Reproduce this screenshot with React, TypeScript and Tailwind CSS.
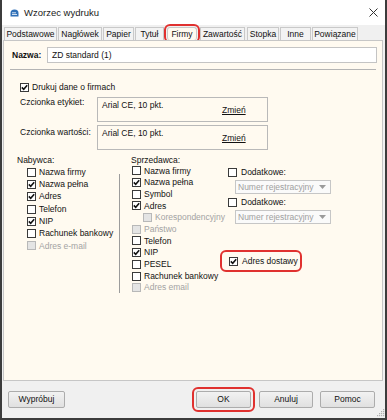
import clsx from "clsx";

const font = "font-['Liberation_Sans',Arial,sans-serif]";

function Check({ checked, disabled }: { checked?: boolean; disabled?: boolean }) {
  return (
    <span
      className={clsx(
        "flex h-[9px] w-[9px] shrink-0 items-center justify-center border",
        disabled ? "border-[#b8b8b8] bg-[#e4e4e4]" : "border-[#3a3a3a] bg-white"
      )}
    >
      {checked && (
        <svg width="7" height="7" viewBox="0 0 7 7">
          <path d="M0.8 3.4 L2.7 5.3 L6.2 1.3" stroke="#111" strokeWidth="1.6" fill="none" />
        </svg>
      )}
    </span>
  );
}

function Row({
  label,
  checked,
  disabled,
  className,
}: {
  label: string;
  checked?: boolean;
  disabled?: boolean;
  className?: string;
}) {
  return (
    <div className={clsx("flex items-center gap-[3px]", className)}>
      <Check checked={checked} disabled={disabled} />
      <span className={clsx("whitespace-nowrap leading-none", disabled ? "text-[#a3a3a3]" : "text-[#111]")}>
        {label}
      </span>
    </div>
  );
}

function FontBox({ labelClass, label }: { labelClass: string; label: string }) {
  return (
    <div className="flex h-[25px] pl-[16px]">
      <span className={clsx("w-[77px] leading-[10px]", labelClass)}>{label}</span>
      <div className="flex h-full w-[171px] border border-[#b9b9b9] bg-[#fffaf0] pl-[4px]">
        <span className="mt-[2px] w-[120px] self-start leading-[10px]">Arial CE, 10 pkt.</span>
        <span className="self-center leading-[10px] underline">Zmień</span>
      </div>
    </div>
  );
}

function Select() {
  return (
    <div className="ml-[7px] flex h-[14px] w-[96px] items-center justify-between border border-[#c6c6c6] bg-[#fafafa] pl-[2px] pr-[4px] text-[#a0a0a0]">
      <span className="leading-none whitespace-nowrap">Numer rejestracyjny</span>
      <svg width="7" height="4" viewBox="0 0 7 4">
        <path d="M0 0 H7 L3.5 4 Z" fill="#9a9a9a" />
      </svg>
    </div>
  );
}

function Btn({ children, className }: { children: React.ReactNode; className?: string }) {
  return (
    <div
      className={clsx(
        "flex h-[17px] items-center justify-center rounded-[2px] border border-[#acacac] bg-gradient-to-b from-[#f2f2f2] to-[#e0e0e0] text-[#111]",
        className
      )}
    >
      {children}
    </div>
  );
}

const tabs: { label: string; cls: string }[] = [
  { label: "Podstawowe", cls: "w-[53px]" },
  { label: "Nagłówek", cls: "ml-[1px] w-[44px]" },
  { label: "Papier", cls: "ml-[1px] w-[31px]" },
  { label: "Tytuł", cls: "ml-[1px] w-[29px]" },
  { label: "Firmy", cls: "ml-[3px] w-[30px]" },
  { label: "Zawartość", cls: "ml-[3px] w-[45px]" },
  { label: "Stopka", cls: "ml-[2px] w-[32px]" },
  { label: "Inne", cls: "ml-[1px] w-[31px]" },
  { label: "Powiązane", cls: "ml-[1px] w-[46px]" },
];

export default function App() {
  return (
    <div
      className={clsx(
        "flex h-[420px] w-[387px] flex-col overflow-hidden border-x-2 border-b-2 border-[#3c3c3c] bg-[#f0f0f0] text-[8.5px] text-[#111]",
        font
      )}
    >
      {/* title bar */}
      <div className="flex h-[25px] shrink-0 items-center bg-white pl-[8px] pr-[7px]">
        <svg width="9" height="8" viewBox="0 0 9 8" className="mr-[5px]">
          <path d="M0.5 4 A4 3.6 0 0 1 8.5 4 L8.5 7.5 L0.5 7.5 Z" fill="#2f6fb6" />
          <path d="M2 5.5 H7 M2 3.8 H6" stroke="#fff" strokeWidth="0.8" />
        </svg>
        <span className="text-[9.5px] leading-none text-[#1a1a1a]">Wzorzec wydruku</span>
        <svg width="9" height="9" viewBox="0 0 9 9" className="ml-auto">
          <path d="M0.5 0.5 L8.5 8.5 M8.5 0.5 L0.5 8.5" stroke="#333" strokeWidth="1" />
        </svg>
      </div>

      {/* tabs */}
      <div className="mt-[2px] flex h-[13px] shrink-0 pl-[2px]">
        {tabs.map((t) => (
          <div
            key={t.label}
            className={clsx(
              "flex h-full items-center justify-center border border-b-0 border-[#c9c9c9] leading-none",
              t.label === "Firmy"
                ? "rounded-[3px] bg-[#fffaf0] outline-2 outline-offset-1 outline-[#e0312f]"
                : "bg-[#f3f3f3]",
              t.cls
            )}
          >
            {t.label}
          </div>
        ))}
      </div>

      {/* panel */}
      <div className="ml-[1px] mr-[2px] flex flex-1 flex-col border border-[#c6c6c6] bg-[#fffaf0]">
        <div className="mt-[6px] flex h-[16px] items-center pl-[8px] pr-[5px]">
          <span className="w-[35px] font-bold">Nazwa:</span>
          <div className="flex h-full flex-1 items-center border border-[#c4c4c4] bg-white pl-[4px]">
            ZD standard (1)
          </div>
        </div>
        <div className="mx-[6px] mt-[6px] h-px bg-[#b4b4b4]" />

        <div className="mt-[11px] flex h-[12px] items-center pl-[16px]">
          <Row label="Drukuj dane o firmach" checked />
        </div>

        <div className="mt-[4px]">
          <FontBox label="Czcionka etykiet:" labelClass="mt-0" />
        </div>
        <div className="mt-[3px]">
          <FontBox label="Czcionka wartości:" labelClass="mt-[2px]" />
        </div>

        <div className="mt-[5px] flex pl-[13px]">
          {/* Nabywca */}
          <div className="flex w-[102px] flex-col">
            <span className="h-[11px] leading-[11px]">Nabywca:</span>
            <div className="flex flex-col pl-[10px]">
              <Row className="h-[12.3px]" label="Nazwa firmy" />
              <Row className="h-[12.3px]" label="Nazwa pełna" checked />
              <Row className="h-[12.3px]" label="Adres" checked />
              <Row className="h-[12.3px]" label="Telefon" />
              <Row className="h-[12.3px]" label="NIP" checked />
              <Row className="h-[12.3px]" label="Rachunek bankowy" />
              <Row className="h-[12.3px]" label="Adres e-mail" disabled />
            </div>
          </div>
          <div className="mt-[19px] h-[119px] w-px bg-[#9c9c9c]" />

          {/* Sprzedawca */}
          <div className="ml-[11px] flex w-[97px] flex-col">
            <span className="h-[10px] leading-[10px]">Sprzedawca:</span>
            <div className="flex flex-col pl-[1px]">
              <Row className="h-[11.7px]" label="Nazwa firmy" />
              <Row className="h-[11.7px]" label="Nazwa pełna" checked />
              <Row className="h-[11.7px]" label="Symbol" />
              <Row className="h-[11.7px]" label="Adres" checked />
              <Row className="h-[11.7px] pl-[11px]" label="Korespondencyjny" disabled />
              <Row className="h-[11.7px]" label="Państwo" disabled />
              <Row className="h-[11.7px]" label="Telefon" />
              <Row className="h-[11.7px]" label="NIP" checked />
              <Row className="h-[11.7px]" label="PESEL" />
              <Row className="h-[11.7px]" label="Rachunek bankowy" />
              <Row className="h-[11.7px]" label="Adres email" disabled />
            </div>
          </div>

          {/* right column */}
          <div className="flex flex-col pt-[11px]">
            <Row className="h-[12px] gap-[4px]" label="Dodatkowe:" />
            <div className="mt-[2px]">
              <Select />
            </div>
            <Row className="mt-[2px] h-[12px] gap-[4px]" label="Dodatkowe:" />
            <div className="mt-[2px]">
              <Select />
            </div>
            <div className="-ml-[6px] mt-[28px] flex h-[18px] w-[78px] items-center rounded-[4px] pl-[7px] outline-2 outline-[#e0312f]">
              <Row className="gap-[4px]" label="Adres dostawy" checked />
            </div>
          </div>
        </div>
      </div>

      {/* bottom bar */}
      <div className="flex h-[37px] shrink-0 items-center pl-[6px]">
        <Btn className="w-[57px]">Wypróbuj</Btn>
        <Btn className="ml-auto w-[55px] outline-2 outline-offset-[2px] outline-[#e0312f]">OK</Btn>
        <Btn className="ml-[8px] w-[54px]">Anuluj</Btn>
        <Btn className="ml-[7px] w-[55px]">Pomoc</Btn>
        <svg width="8" height="8" viewBox="0 0 8 8" className="ml-[2px] self-end mb-[1px]">
          <g fill="#b0b0b0">
            <rect x="6" y="0" width="1.2" height="1.2" />
            <rect x="4" y="2" width="1.2" height="1.2" />
            <rect x="6" y="2" width="1.2" height="1.2" />
            <rect x="2" y="4" width="1.2" height="1.2" />
            <rect x="4" y="4" width="1.2" height="1.2" />
            <rect x="6" y="4" width="1.2" height="1.2" />
            <rect x="0" y="6" width="1.2" height="1.2" />
            <rect x="2" y="6" width="1.2" height="1.2" />
            <rect x="4" y="6" width="1.2" height="1.2" />
            <rect x="6" y="6" width="1.2" height="1.2" />
          </g>
        </svg>
      </div>
    </div>
  );
}
